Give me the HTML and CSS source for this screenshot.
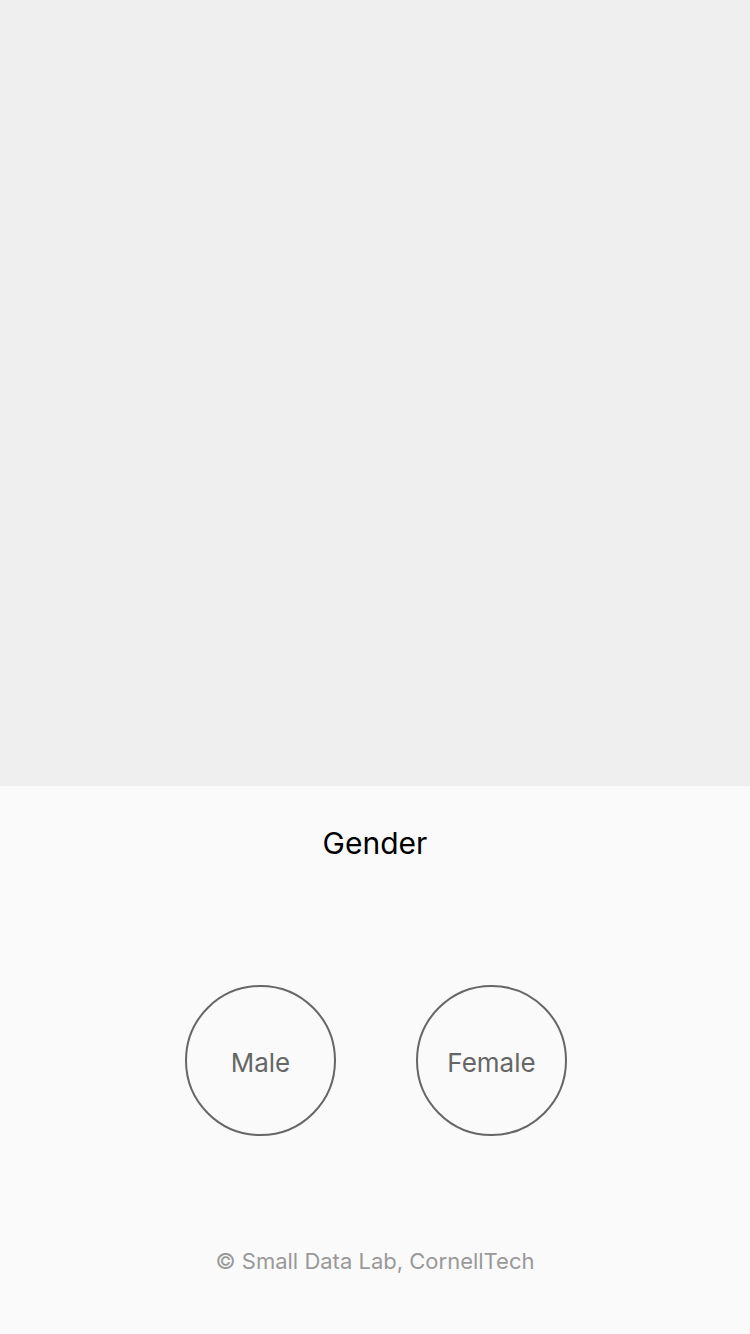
FILE: index.html
```html
<!DOCTYPE html>
<html>
<head>
<meta charset="utf-8">
<link rel="stylesheet" href="styles.css">
</head>
<body>
<div class="hero"></div>
<div class="panel">
  <div class="title">Gender</div>
  <div class="choices">
    <div class="choice">Male</div>
    <div class="choice">Female</div>
  </div>
  <div class="footer">© Small Data Lab, CornellTech</div>
</div>
</body>
</html>
```
FILE: styles.css
```css
html, body {
  margin: 0;
  padding: 0;
  background: #fafafa;
  font-family: Inter, "Liberation Sans", sans-serif;
}
.hero {
  height: 786px;
  background: #efefef;
}
.panel {
  height: 548px;
  background: #fafafa;
  display: flex;
  flex-direction: column;
  align-items: center;
}
.title {
  margin-top: 39px;
  font-size: 30px;
  line-height: 36px;
  color: #000;
}
.choices {
  margin-top: 124px;
  display: flex;
  gap: 80px;
  padding-left: 2px;
}
.choice {
  width: 151px;
  height: 151px;
  box-sizing: border-box;
  border: 2px solid #666;
  border-radius: 50%;
  display: flex;
  align-items: center;
  justify-content: center;
  font-size: 26px;
  color: #666;
  padding-top: 4px;
}
.footer {
  margin-top: 112px;
  font-size: 22px;
  line-height: 26px;
  color: #999;
}
```
